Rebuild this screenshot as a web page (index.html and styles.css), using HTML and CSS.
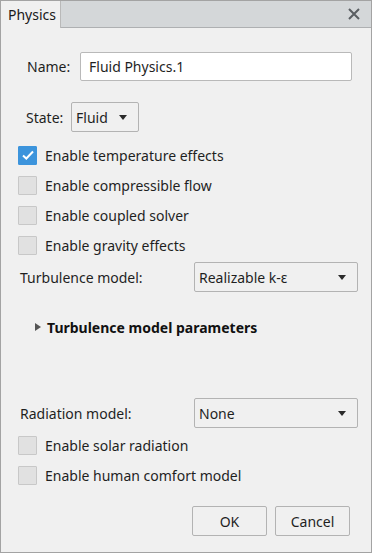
FILE: index.html
```html
<!DOCTYPE html>
<html>
<head>
<meta charset="utf-8">
<link rel="stylesheet" href="styles.css">
</head>
<body>
<div class="dialog">
  <div class="titlebar">
    <div class="tab">Physics</div>
    <div class="close"><svg width="12" height="12" viewBox="0 0 12 12"><path d="M1 1L11 11M11 1L1 11" stroke="#5a5e62" stroke-width="2" fill="none"/></svg></div>
  </div>
  <div class="content">
    <div class="row name-row">
      <span class="label">Name:</span>
      <div class="input">Fluid Physics.1</div>
    </div>
    <div class="row state-row">
      <span class="label">State:</span>
      <div class="select small"><span>Fluid</span><span class="arrow"></span></div>
    </div>
    <div class="check-row first"><span class="box checked"><svg width="14" height="12" viewBox="0 0 14 12"><path d="M2 6.5L5.3 9.5L12 2.5" stroke="#fff" stroke-width="2" fill="none"/></svg></span><span>Enable temperature effects</span></div>
    <div class="check-row"><span class="box"></span><span>Enable compressible flow</span></div>
    <div class="check-row"><span class="box"></span><span>Enable coupled solver</span></div>
    <div class="check-row"><span class="box"></span><span>Enable gravity effects</span></div>
    <div class="row combo-row turb">
      <span class="label">Turbulence model:</span>
      <div class="select wide"><span>Realizable k-ε</span><span class="arrow"></span></div>
    </div>
    <div class="params"><span class="tri"></span><span>Turbulence model parameters</span></div>
    <div class="row combo-row rad">
      <span class="label">Radiation model:</span>
      <div class="select wide"><span>None</span><span class="arrow"></span></div>
    </div>
    <div class="check-row"><span class="box"></span><span>Enable solar radiation</span></div>
    <div class="check-row"><span class="box"></span><span>Enable human comfort model</span></div>
    <div class="buttons">
      <div class="btn">OK</div>
      <div class="btn">Cancel</div>
    </div>
  </div>
</div>
</body>
</html>
```
FILE: styles.css
```css
* { box-sizing: border-box; }
html, body { margin: 0; padding: 0; }
body {
  font-family: "Noto Sans", "Open Sans", sans-serif;
  font-size: 14px;
  color: #1f1f1f;
  background: #fff;
}
.dialog {
  width: 372px;
  height: 553px;
  border: 1px solid #a3a3a3;
  background: #f0f0f0;
  display: flex;
  flex-direction: column;
}
.titlebar {
  height: 27px;
  background: #d4d7d9;
  border-bottom: 1px solid #aeb0b2;
  display: flex;
  align-items: stretch;
  justify-content: space-between;
}
.tab {
  width: 60px;
  background: #f0f0f0;
  border-right: 1px solid #b9b9b9;
  margin-bottom: -1px;
  padding-left: 7px;
  display: flex;
  align-items: center;
  font-size: 14px;
  color: #1a1a1a;
}
.close {
  width: 30px;
  display: flex;
  align-items: center;
  justify-content: center;
  padding-right: 4px;
}
.content {
  display: flex;
  flex-direction: column;
}
.row { display: flex; align-items: center; }
.name-row { margin-top: 24px; padding-left: 26px; }
.name-row .label { width: 53px; }
.input {
  width: 272px;
  height: 29px;
  background: #fff;
  border: 1px solid #b9b9b9;
  border-radius: 2px;
  padding-left: 8px;
  display: flex;
  align-items: center;
}
.state-row { margin-top: 21px; padding-left: 25px; }
.state-row .label { width: 45px; }
.select {
  height: 30px;
  border: 1px solid #b3b3b3;
  border-radius: 2px;
  background: #f0f0f0;
  display: flex;
  align-items: center;
  justify-content: space-between;
  padding: 0 11px 0 4px;
}
.select.small { width: 68px; }
.select.wide { width: 164px; }
.arrow {
  width: 0; height: 0;
  border-left: 4px solid transparent;
  border-right: 4px solid transparent;
  border-top: 5px solid #2a2a2a;
}
.check-row {
  height: 30px;
  display: flex;
  align-items: center;
  padding-left: 17px;
  gap: 8px;
}
.check-row.first { margin-top: 8px; }
.box {
  width: 19px;
  height: 19px;
  background: #e1e1e1;
  border: 1px solid #c8c8c8;
  border-radius: 1px;
  display: flex;
  align-items: center;
  justify-content: center;
}
.box.checked {
  background: #3c94dc;
  border-color: #3c94dc;
}
.combo-row { padding-left: 19px; }
.combo-row .label { width: 174px; }
.turb { margin-top: 2px; }
.params {
  margin-top: 20px;
  height: 30px;
  display: flex;
  align-items: center;
  padding-left: 34px;
  gap: 6px;
  font-weight: bold;
  color: #111;
}
.tri {
  width: 0; height: 0;
  border-top: 4.5px solid transparent;
  border-bottom: 4.5px solid transparent;
  border-left: 6px solid #555;
}
.rad { margin-top: 56px; margin-bottom: 2px; }
.buttons {
  margin-top: 16px;
  display: flex;
  justify-content: flex-end;
  gap: 8px;
  padding-right: 21px;
}
.btn {
  width: 75px;
  height: 30px;
  border: 1px solid #b3b3b3;
  border-radius: 2px;
  background: #f0f0f0;
  display: flex;
  align-items: center;
  justify-content: center;
}
```
